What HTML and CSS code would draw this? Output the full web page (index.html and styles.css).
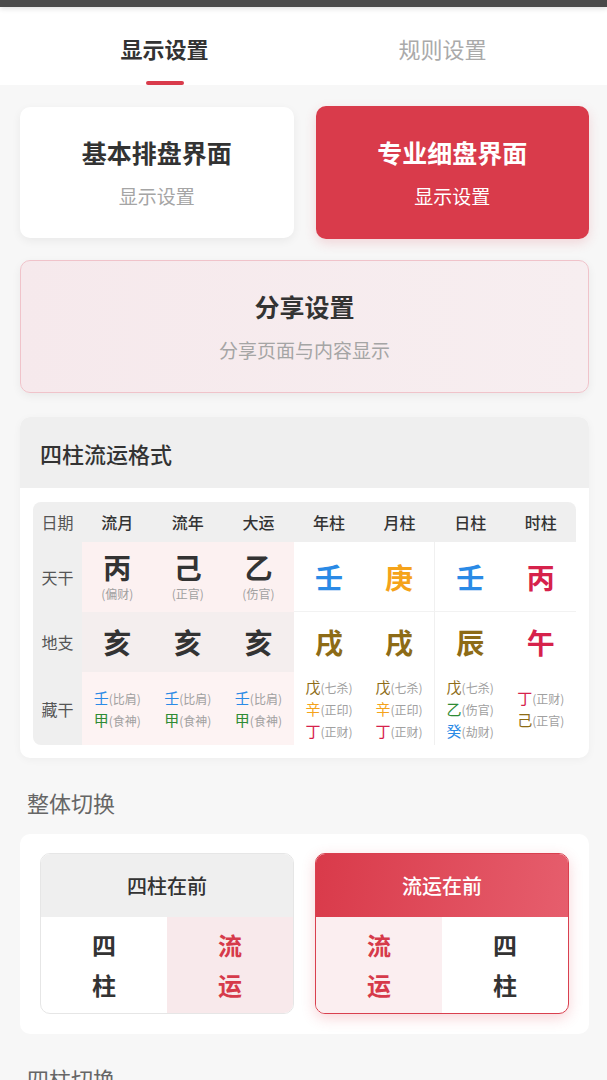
FILE: index.html
```html
<!DOCTYPE html>
<html lang="zh-CN">
<head>
<meta charset="utf-8">
<title>显示设置</title>
<link rel="stylesheet" href="styles.css">
</head>
<body>
<div class="statusbar"></div>
<header class="tabs">
  <div class="tab active"><span class="tab-label">显示设置</span><span class="indicator"></span></div>
  <div class="tab"><span class="tab-label">规则设置</span></div>
</header>

<main class="content">
  <div class="mode-grid">
    <div class="mode-card">
      <div class="card-title">基本排盘界面</div>
      <div class="card-sub">显示设置</div>
    </div>
    <div class="mode-card selected">
      <div class="card-title">专业细盘界面</div>
      <div class="card-sub">显示设置</div>
    </div>
  </div>

  <div class="mode-card share">
    <div class="card-title">分享设置</div>
    <div class="card-sub">分享页面与内容显示</div>
  </div>

  <section class="panel">
    <div class="panel-head">四柱流运格式</div>
    <div class="panel-body">
      <div class="chart">
        <div class="c-label c-corner">日期</div>
        <div class="c-head">流月</div>
        <div class="c-head">流年</div>
        <div class="c-head">大运</div>
        <div class="c-head">年柱</div>
        <div class="c-head">月柱</div>
        <div class="c-head">日柱</div>
        <div class="c-head c-head-end">时柱</div>

        <div class="c-label">天干</div>
        <div class="cell flow-gan"><span class="big dark">丙</span><span class="god">(偏财)</span></div>
        <div class="cell flow-gan"><span class="big dark">己</span><span class="god">(正官)</span></div>
        <div class="cell flow-gan"><span class="big dark">乙</span><span class="god">(伤官)</span></div>
        <div class="cell pillar row-line"><span class="big water">壬</span></div>
        <div class="cell pillar row-line col-line"><span class="big metal">庚</span></div>
        <div class="cell pillar row-line"><span class="big water">壬</span></div>
        <div class="cell pillar row-line"><span class="big fire">丙</span></div>

        <div class="c-label">地支</div>
        <div class="cell flow-zhi"><span class="big dark">亥</span></div>
        <div class="cell flow-zhi"><span class="big dark">亥</span></div>
        <div class="cell flow-zhi"><span class="big dark">亥</span></div>
        <div class="cell pillar"><span class="big earth">戌</span></div>
        <div class="cell pillar col-line"><span class="big earth">戌</span></div>
        <div class="cell pillar"><span class="big earth">辰</span></div>
        <div class="cell pillar"><span class="big fire">午</span></div>

        <div class="c-label c-label-end">藏干</div>
        <div class="cell flow-hide"><div class="hs"><span class="water">壬</span><em>(比肩)</em></div><div class="hs"><span class="wood">甲</span><em>(食神)</em></div></div>
        <div class="cell flow-hide"><div class="hs"><span class="water">壬</span><em>(比肩)</em></div><div class="hs"><span class="wood">甲</span><em>(食神)</em></div></div>
        <div class="cell flow-hide"><div class="hs"><span class="water">壬</span><em>(比肩)</em></div><div class="hs"><span class="wood">甲</span><em>(食神)</em></div></div>
        <div class="cell pillar"><div class="hs"><span class="earth">戊</span><em>(七杀)</em></div><div class="hs"><span class="metal">辛</span><em>(正印)</em></div><div class="hs"><span class="fire">丁</span><em>(正财)</em></div></div>
        <div class="cell pillar col-line"><div class="hs"><span class="earth">戊</span><em>(七杀)</em></div><div class="hs"><span class="metal">辛</span><em>(正印)</em></div><div class="hs"><span class="fire">丁</span><em>(正财)</em></div></div>
        <div class="cell pillar"><div class="hs"><span class="earth">戊</span><em>(七杀)</em></div><div class="hs"><span class="wood">乙</span><em>(伤官)</em></div><div class="hs"><span class="water">癸</span><em>(劫财)</em></div></div>
        <div class="cell pillar cell-end"><div class="hs"><span class="fire">丁</span><em>(正财)</em></div><div class="hs"><span class="earth">己</span><em>(正官)</em></div></div>
      </div>
    </div>
  </section>

  <h3 class="group-title">整体切换</h3>
  <div class="switch-card">
    <div class="option">
      <div class="opt-head">四柱在前</div>
      <div class="opt-body">
        <div class="half">四<br>柱</div>
        <div class="half tint red">流<br>运</div>
      </div>
    </div>
    <div class="option active">
      <div class="opt-head">流运在前</div>
      <div class="opt-body">
        <div class="half tint red">流<br>运</div>
        <div class="half">四<br>柱</div>
      </div>
    </div>
  </div>

  <h3 class="group-title">四柱切换</h3>
</main>
</body>
</html>
```

FILE: styles.css
```css
* { box-sizing: border-box; }

html, body {
  margin: 0;
  padding: 0;
}

body {
  background: #f7f7f7;
  font-family: "Noto Sans CJK SC", "Noto Sans", sans-serif;
  color: #333;
  width: 607px;
  height: 1080px;
  overflow: hidden;
}

.statusbar {
  height: 7px;
  background: #4a4a4a;
  box-shadow: 0 2px 5px rgba(0,0,0,0.12);
  position: relative;
  z-index: 2;
}

.tabs {
  height: 78px;
  background: #fff;
  display: flex;
  justify-content: center;
}

.tab {
  width: 278px;
  display: flex;
  flex-direction: column;
  align-items: center;
  padding-top: 26px;
}

.tab-label {
  font-size: 22px;
  line-height: 30px;
  color: #aaa;
}

.tab.active .tab-label {
  color: #333;
  font-weight: 700;
}

.indicator {
  margin-top: 18px;
  width: 38px;
  height: 4px;
  border-radius: 2px;
  background: #d93b4b;
}

.content {
  padding: 22px 18px 0 20px;
}

.mode-grid {
  display: grid;
  grid-template-columns: 1fr 1fr;
  gap: 22px;
}

.mode-card {
  height: 131px;
  background: #fff;
  border-radius: 10px;
  box-shadow: 0 3px 10px rgba(0,0,0,0.06);
  display: flex;
  flex-direction: column;
  align-items: center;
  justify-content: center;
  gap: 13px;
}

.card-title {
  font-size: 25px;
  line-height: 34px;
  font-weight: 700;
  color: #333;
}

.card-sub {
  font-size: 19px;
  line-height: 28px;
  color: #a5a5a5;
}

.mode-card.selected {
  background: #d93b4b;
  height: 133px;
  margin-top: -1px;
  box-shadow: 0 4px 12px rgba(217,59,75,0.18);
}

.mode-card.selected .card-title,
.mode-card.selected .card-sub {
  color: #fff;
}

.mode-card.share {
  margin-top: 21px;
  height: 133px;
  background: linear-gradient(90deg, #f6e9ec, #f7eef0);
  border: 1px solid #f0c3ca;
}

.panel {
  margin-top: 24px;
  background: #fff;
  border-radius: 10px;
  overflow: hidden;
  box-shadow: 0 2px 8px rgba(0,0,0,0.04);
}

.panel-head {
  height: 71px;
  background: #efefef;
  padding-left: 20px;
  display: flex;
  align-items: center;
  font-size: 22px;
  font-weight: 500;
  color: #333;
}

.panel-body {
  padding: 14px 13px 13px 13px;
}

.chart {
  display: grid;
  grid-template-columns: 49px repeat(7, 1fr);
  grid-template-rows: 40px 70px 60px 73px;
  border-radius: 8px;
  overflow: hidden;
  background: #fff;
}

.c-label {
  background: #efefef;
  display: flex;
  align-items: center;
  justify-content: center;
  font-size: 16px;
  color: #555;
}

.c-head {
  background: #efefef;
  display: flex;
  align-items: center;
  justify-content: center;
  font-size: 16px;
  font-weight: 500;
  color: #333;
}

.cell {
  display: flex;
  flex-direction: column;
  align-items: center;
  justify-content: center;
}

.flow-gan { background: #fcf1f1; }
.flow-zhi { background: #f4eeee; }
.flow-hide { background: #fdf3f3; }

.pillar { background: #fff; }
.row-line { border-bottom: 1px solid #f2f2f2; }
.col-line { border-right: 1px solid #f0f0f0; }

.big {
  font-size: 28px;
  line-height: 32px;
  font-weight: 700;
}

.god {
  margin-top: 2px;
  font-size: 12px;
  line-height: 18px;
  color: #a0a0a0;
}

.hs {
  font-size: 15px;
  line-height: 21px;
  white-space: nowrap;
}

.hs em {
  font-style: normal;
  font-size: 12px;
  color: #a0a0a0;
}

.dark { color: #333; }
.water { color: #2a8ae6; }
.metal { color: #f5a31a; }
.fire { color: #d6224b; }
.earth { color: #8d6b16; }
.wood { color: #2e8b34; }

.group-title {
  margin: 29px 0 17px 7px;
  font-size: 22px;
  line-height: 30px;
  font-weight: 400;
  color: #666;
}

.switch-card {
  height: 200px;
  background: #fff;
  border-radius: 10px;
  padding: 19px 20px 20px 20px;
  display: grid;
  grid-template-columns: 1fr 1fr;
  gap: 21px;
}

.option {
  border: 1px solid #e6e6e6;
  border-radius: 10px;
  overflow: hidden;
  display: flex;
  flex-direction: column;
  background: #fff;
}

.opt-head {
  height: 63px;
  flex: none;
  background: #efefef;
  display: flex;
  align-items: center;
  justify-content: center;
  font-size: 20px;
  font-weight: 500;
  color: #333;
}

.opt-body {
  flex: 1;
  display: grid;
  grid-template-columns: 1fr 1fr;
}

.half {
  display: flex;
  align-items: center;
  justify-content: center;
  text-align: center;
  font-size: 24px;
  line-height: 40px;
  font-weight: 700;
  color: #333;
}

.half.tint { background: #f8e9eb; }
.half.red { color: #d63a4a; }

.option.active {
  border: 1.5px solid #d9404f;
  box-shadow: 0 4px 14px rgba(217,59,75,0.22);
}

.option.active .opt-head {
  background: linear-gradient(100deg, #d93a4a, #e65e6d);
  color: #fff;
}

.option.active .half.tint { background: #fbeef0; }
```
